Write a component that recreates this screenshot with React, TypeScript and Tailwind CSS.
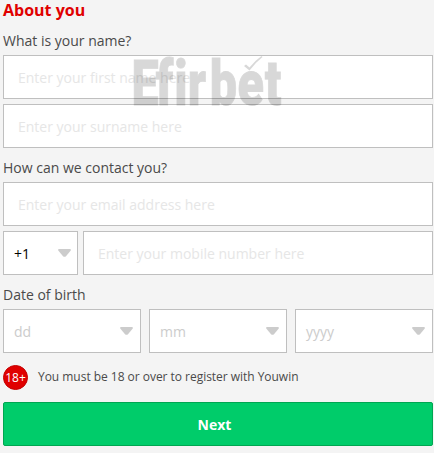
import React from 'react';

interface FieldProps {
  placeholder: string;
  type?: string;
}

interface DropdownProps {
  label: string;
  className?: string;
}

const TextField: React.FC<FieldProps> = ({ placeholder, type = 'text' }) => (
  <input
    type={type}
    placeholder={placeholder}
    className="block h-11 w-full min-w-0 border border-[#bfbfbf] bg-white pt-px pl-[14px] text-sm text-black outline-none placeholder:text-[#e6e6e6]"
  />
);

const Dropdown: React.FC<DropdownProps> = ({ label, className = 'pr-[7px] text-[#cccccc]' }) => (
  <button
    type="button"
    className={`flex h-11 w-full items-center justify-between border border-[#bfbfbf] bg-white pl-[10px] text-sm ${className}`}
  >
    <span className="pt-0.5">{label}</span>
    <svg width="13" height="8" viewBox="0 0 13 8" className="text-[#cccccc]">
      <path d="M1 0h11q1.5 0.5 0.5 1.8L8 7.2q-1.5 1.3-3 0L0.5 1.8Q-0.5 0.5 1 0Z" fill="currentColor" />
    </svg>
  </button>
);

// Translucent brand mark laid over the name fields
const Watermark: React.FC = () => (
  <svg
    width="160"
    height="76"
    viewBox="0 0 160 76"
    className="pointer-events-none absolute top-[53px] left-[132px] overflow-visible opacity-15"
  >
    <text
      x="-0.5 31 55 72.5 101 137 172.5"
      y="52"
      transform="scale(0.77 1)"
      stroke="currentColor"
      strokeWidth="0.8"
      className="font-['Roboto'] text-[63px] font-black text-black"
    >
      Efirbet
    </text>
    <path d="M112 13l2-1.5 3.5 3q5-6.500 12-11.5l1 1q-7 5.500-13 13.500z" />
  </svg>
);

export default function App() {
  return (
    <main className="relative h-[453px] w-[434px] overflow-hidden bg-[#f4f4f4] pr-px pl-[3px] font-['Open_Sans','Noto_Sans',sans-serif] text-sm text-[#4a4a4a]">
      <h1 className="h-[29px] text-base leading-[21px] font-bold text-[#e00000]">About you</h1>

      <section className="h-[127px]">
        <h2 className="h-[26px] leading-6">What is your name?</h2>
        <div className="flex flex-col gap-[5px]">
          <TextField placeholder="Enter your first name here" />
          <TextField placeholder="Enter your surname here" />
        </div>
      </section>

      <section className="h-[127px]">
        <h2 className="h-[26px] leading-6">How can we contact you?</h2>
        <div className="flex flex-col gap-[5px]">
          <TextField type="email" placeholder="Enter your email address here" />
          <div className="grid grid-cols-[75px_1fr] gap-[5px]">
            <Dropdown label="+1" className="pr-[6.5px] text-black" />
            <TextField type="tel" placeholder="Enter your mobile number here" />
          </div>
        </div>
      </section>

      <section>
        <h2 className="h-[26px] leading-6">Date of birth</h2>
        <div className="grid grid-cols-3 gap-2">
          <Dropdown label="dd" />
          <Dropdown label="mm" />
          <Dropdown label="yyyy" />
        </div>
      </section>

      <div className="mt-3 flex h-[25px] items-center gap-[10px]">
        <span className="flex size-[25px] items-center justify-center rounded-full border border-[#c40000] bg-[#e00000] text-xs text-white">
          18+
        </span>
        <p className="pb-0.5 text-xs tracking-[-0.03px]">You must be 18 or over to register with Youwin</p>
      </div>

      <button
        type="button"
        className="mt-3 block h-11 w-full rounded-xs border border-[#00a651] bg-[#00cc6a] pt-0.5 pr-[7px] text-sm font-bold text-white"
      >
        Next
      </button>

      <Watermark />
    </main>
  );
}
